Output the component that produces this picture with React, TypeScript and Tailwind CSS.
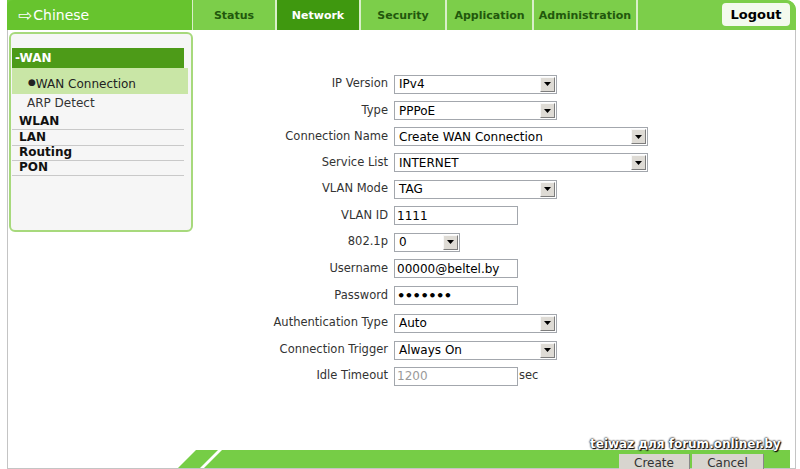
import React from "react";

function Sel({ w, value }: { w: string; value: string }) {
  return (
    <div className={`${w} h-[19px] border border-[#a3a7ad] bg-white flex items-center justify-between pl-[4px] pr-[1px]`}>
      <span className="text-[12px] text-black leading-none">{value}</span>
      <div className="w-[15px] h-[15px] bg-[#dedbd5] border border-t-[#f8f8f8] border-l-[#f8f8f8] border-r-[#7d7d7d] border-b-[#7d7d7d] flex items-center justify-center">
        <svg width="7" height="4" viewBox="0 0 7 4">
          <path d="M0 0h7L3.5 4z" fill="#000" />
        </svg>
      </div>
    </div>
  );
}

function Inp({ value, gray }: { value: string; gray?: boolean }) {
  return (
    <div className="w-[124px] h-[19px] border border-[#a3a7ad] bg-white flex items-center pl-[2px]">
      <span className={`text-[12px] leading-none ${gray ? "text-[#9a9a9a]" : "text-black"}`}>{value}</span>
    </div>
  );
}

export default function App() {
  const rows: { label: string; h: string; el: React.ReactNode }[] = [
    { label: "IP Version", h: "h-[26px]", el: <Sel w="w-[163px]" value="IPv4" /> },
    { label: "Type", h: "h-[27px]", el: <Sel w="w-[163px]" value="PPPoE" /> },
    { label: "Connection Name", h: "h-[25px]", el: <Sel w="w-[254px]" value="Create WAN Connection" /> },
    { label: "Service List", h: "h-[27px]", el: <Sel w="w-[254px]" value="INTERNET" /> },
    { label: "VLAN Mode", h: "h-[26px]", el: <Sel w="w-[163px]" value="TAG" /> },
    { label: "VLAN ID", h: "h-[27px]", el: <Inp value="1111" /> },
    { label: "802.1p", h: "h-[26px]", el: <Sel w="w-[66px]" value="0" /> },
    { label: "Username", h: "h-[27px]", el: <Inp value="00000@beltel.by" /> },
    {
      label: "Password",
      h: "h-[27px]",
      el: (
        <div className="w-[124px] h-[19px] border border-[#a3a7ad] bg-white flex items-center pl-[2px]">
          <span className="text-[13px] font-bold leading-none tracking-[-0.5px] text-black">•••••••</span>
        </div>
      ),
    },
    { label: "Authentication Type", h: "h-[28px]", el: <Sel w="w-[163px]" value="Auto" /> },
    { label: "Connection Trigger", h: "h-[26px]", el: <Sel w="w-[163px]" value="Always On" /> },
    {
      label: "Idle Timeout",
      h: "h-[26px]",
      el: (
        <div className="flex items-center">
          <Inp value="1200" gray />
          <span className="text-[11.5px] text-[#333] ml-[1px]">sec</span>
        </div>
      ),
    },
  ];

  return (
    <div className="w-[800px] h-[469px] bg-white relative overflow-hidden font-['DejaVu_Sans',sans-serif]">
      {/* header */}
      <div className="ml-[7px] w-[789px] h-[30px] flex bg-[#6fca3a] rounded-tr-[10px]">
        <div className="w-[185px] h-full bg-[#67c42e] rounded-tl-[6px] flex items-center pl-[11px]">
          <span className="text-white text-[17px] leading-none mr-[1px]">⇨</span>
          <span className="text-white text-[14px] leading-none">Chinese</span>
        </div>
        <div className="w-[1px] bg-[#d9efc9]" />
        <div className="flex h-full gap-[2px] bg-[#d9efc9]">
          {[
            ["Status", "w-[82px]", false],
            ["Network", "w-[82px]", true],
            ["Security", "w-[84px]", false],
            ["Application", "w-[85px]", false],
            ["Administration", "w-[102px]", false],
          ].map(([t, w, a]) => (
            <div
              key={t as string}
              className={`${w as string} h-full flex items-center justify-center text-[11px] font-bold ${
                a ? "bg-[#3f980f] text-white" : "bg-[#7cce4a] text-[#22580c]"
              }`}
            >
              <span className="mt-[3px]">{t as string}</span>
            </div>
          ))}
        </div>
        <div className="flex-1 h-full bg-[#7cce4a] border-l-2 border-[#d9efc9] rounded-tr-[10px] flex items-start justify-end pr-[6px] pt-[3px]">
          <div className="w-[68px] h-[23px] bg-[#f3faee] rounded-[4px] flex items-center justify-center text-[13px] font-bold text-black">
            Logout
          </div>
        </div>
      </div>

      {/* body */}
      <div className="ml-[7px] w-[789px] h-[439px] border-l border-r border-b border-[#c4c4c4] flex flex-col">
        <div className="flex">
          {/* sidebar */}
          <div className="ml-[1px] mt-[2px] w-[184px] h-[200px] rounded-[6px] border-2 border-[#a7d97c] bg-[#f6f6f6] pt-[14px] pl-[1px]">
            <div className="w-[172px] h-[20px] bg-[#4d9b18] flex items-center pl-[3px] text-white text-[12px] font-bold">
              -WAN
            </div>
            <div className="w-[176px] h-[26px] bg-[#c9e6a6] flex items-end pb-[1px] pl-[16px] text-[12px] text-[#222]">
              <span className="text-[9px] mb-[4px]">●</span>WAN Connection
            </div>
            <div className="h-[18px] flex items-center pl-[15px] text-[12px] text-[#333]">ARP Detect</div>
            {[
              ["WLAN", "h-[18px]"],
              ["LAN", "h-[16px]"],
              ["Routing", "h-[15px]"],
              ["PON", "h-[15px]"],
            ].map(([t, h]) => (
              <div
                key={t}
                className={`w-[172px] ${h} border-b border-[#c9c9c9] flex items-end pl-[7px] text-[12px] font-bold text-[#111] leading-[15px]`}
              >
                {t}
              </div>
            ))}
          </div>

          {/* form */}
          <div className="ml-[7px] mt-[41px] flex flex-col">
            {rows.map((r) => (
              <div key={r.label} className={`flex items-center ${r.h}`}>
                <div className="w-[194px] pr-[6px] text-right text-[11.5px] text-[#333]">{r.label}</div>
                {r.el}
              </div>
            ))}
          </div>
        </div>

        {/* footer */}
        <div className="mt-auto h-[18px] flex">
          <div className="w-[170px]" />
          <svg width="44" height="18" viewBox="0 0 44 18" className="block">
            <path d="M0 18L18 0H40L22 18Z" fill="#76cd46" />
            <path d="M26 18L44 0H44V18Z" fill="#76cd46" />
          </svg>
          <div className="w-[568px] h-full bg-[#76cd46] relative">
            <div className="absolute left-[397px] top-[4px] flex gap-[2px]">
              <div className="w-[71px] h-[16px] bg-[#d8d5cf] border-r border-[#888] flex items-start justify-center text-[12px] text-[#333] leading-[18px]">
                Create
              </div>
              <div className="w-[72px] h-[16px] bg-[#d8d5cf] border-r border-[#888] flex items-start justify-center text-[12px] text-[#333] leading-[18px]">
                Cancel
              </div>
            </div>
          </div>
        </div>
      </div>

      <div className="absolute left-[590px] top-[438px] text-white text-[12px] font-bold leading-none [text-shadow:0_0_2px_#000,0_0_2px_#000,1px_1px_1px_#000]">
        teiwaz для forum.onliner.by
      </div>
    </div>
  );
}
